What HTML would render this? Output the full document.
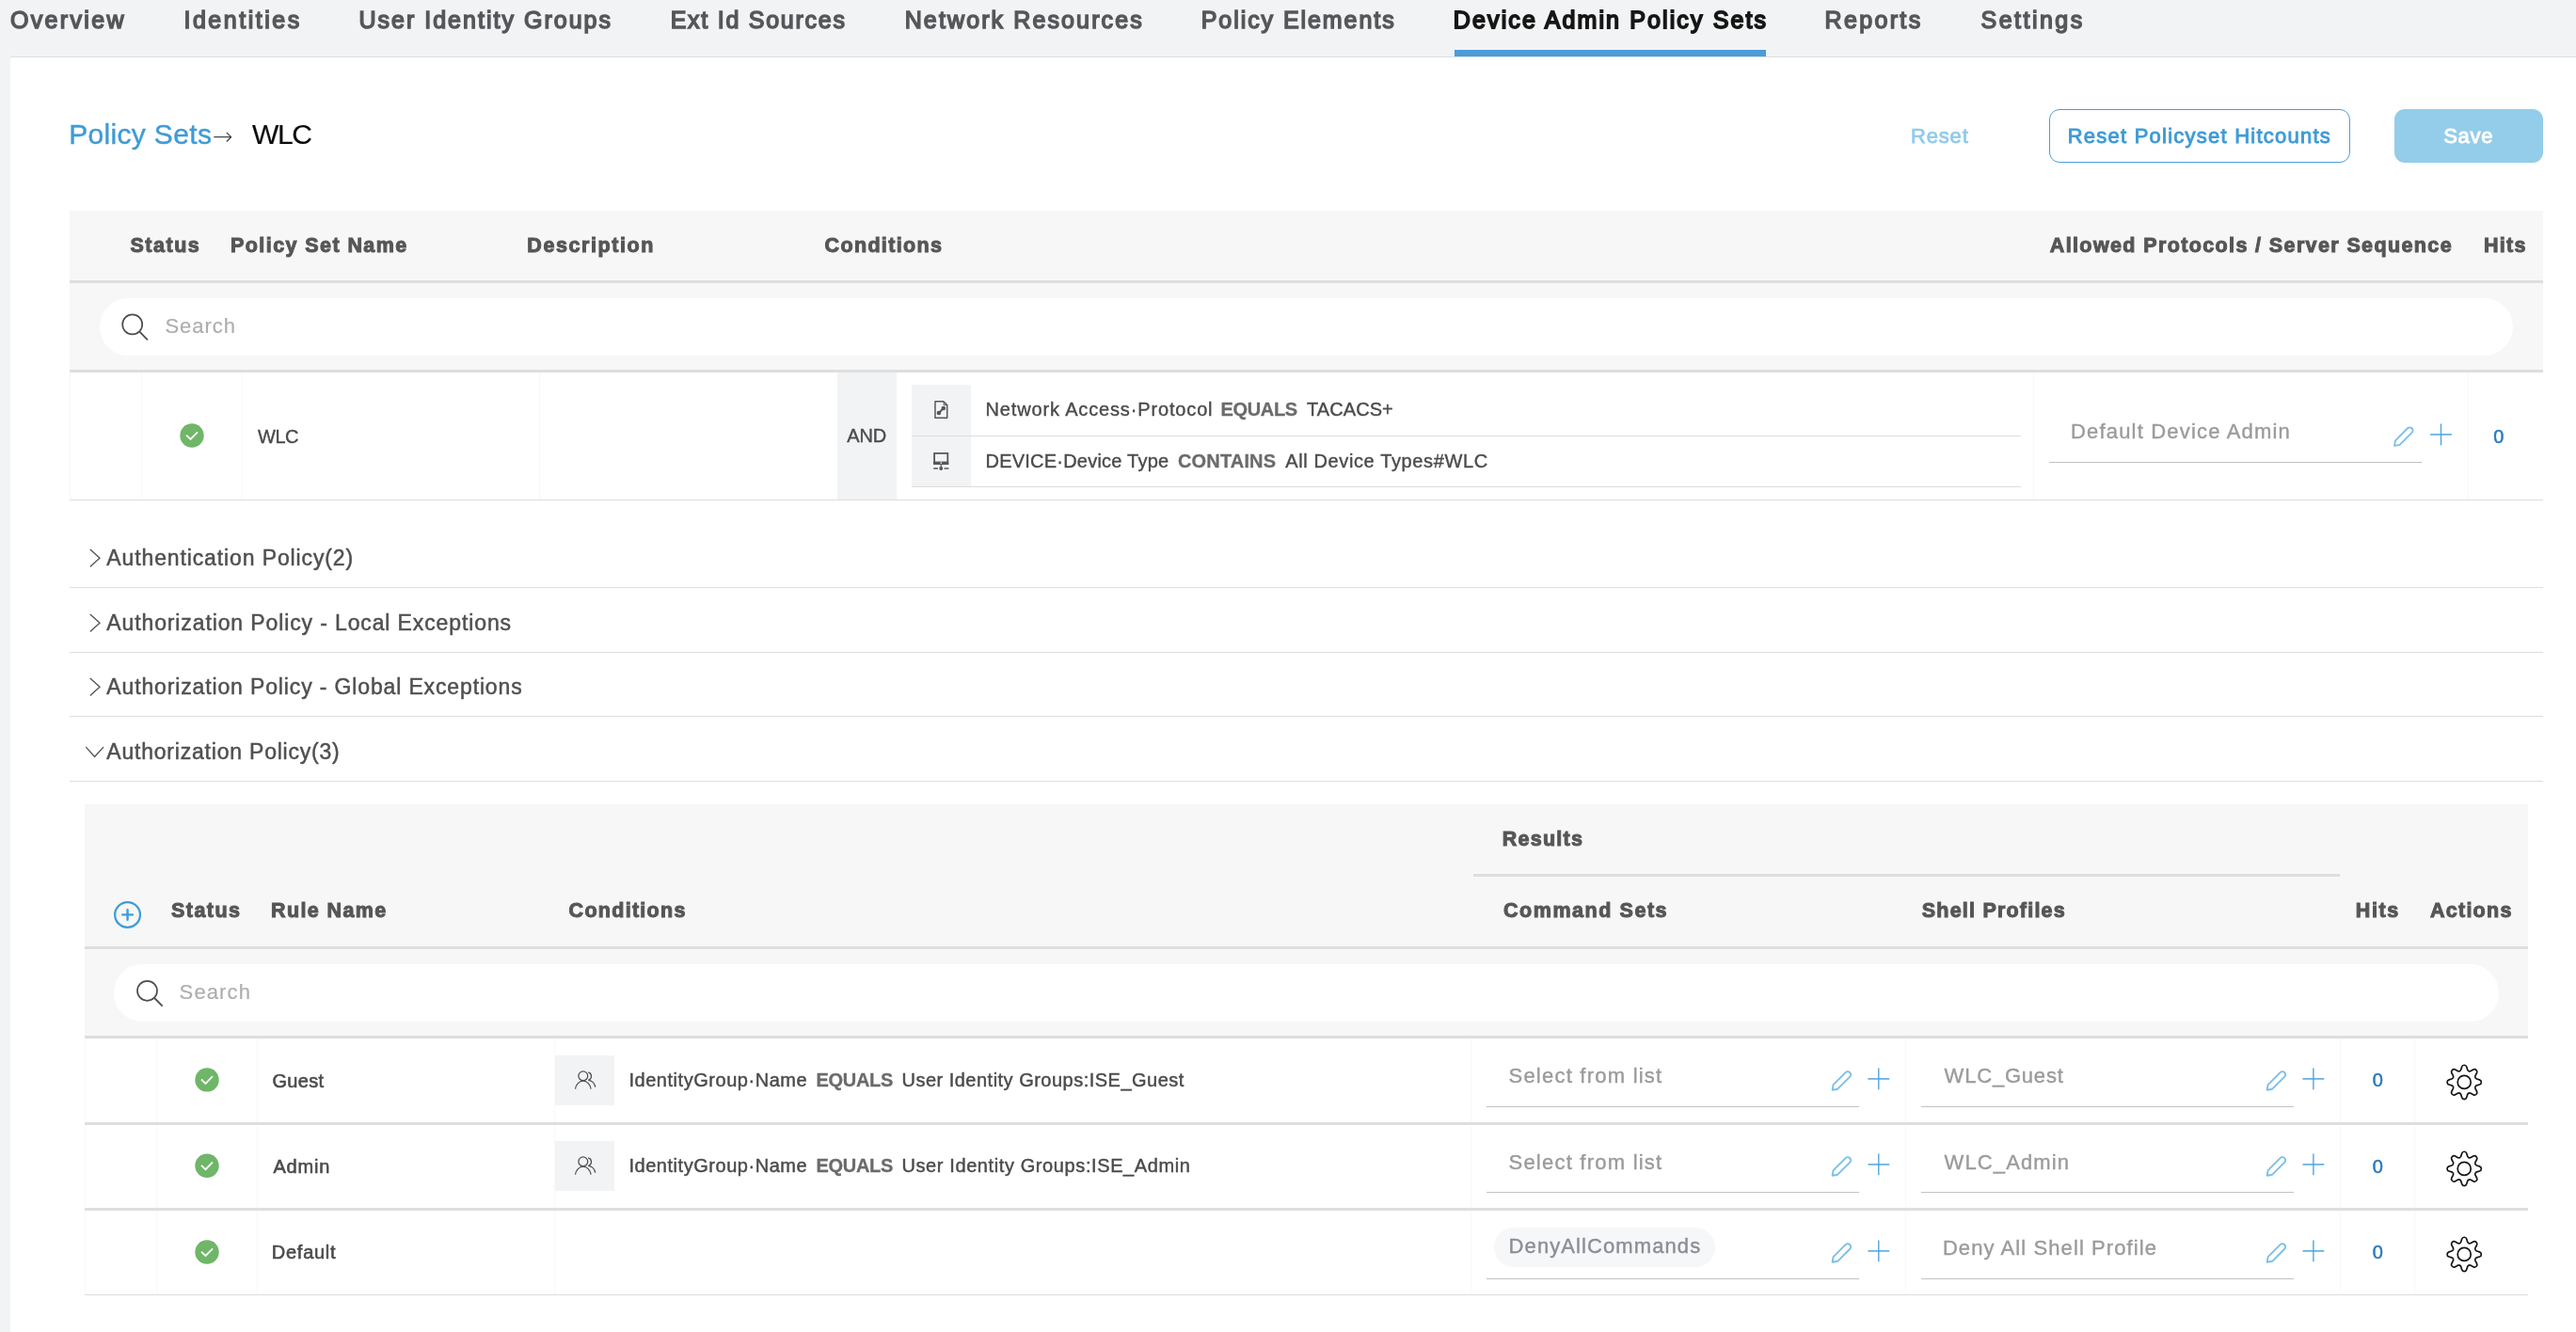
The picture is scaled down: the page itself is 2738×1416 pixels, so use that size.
<!DOCTYPE html>
<html lang="en">
<head>
<meta charset="utf-8">
<title>Device Admin Policy Sets - WLC</title>
<style>
html,body{margin:0;padding:0;background:#fff;}
body{width:2738px;height:1416px;position:relative;font-family:"Liberation Sans",Arial,sans-serif;}
.sec{position:absolute;left:0;top:0;will-change:transform;}
.sec div,.t,.i{position:absolute;}
.t{white-space:nowrap;line-height:1;}
.i{overflow:visible;}
</style>
</head>
<body>
<div class="sec" id="nav">
<div style="left:0px;top:0px;width:2738px;height:60px;background:#f2f3f5;"></div>
<div style="left:11px;top:60px;width:2727px;height:1px;background:#dcdddf;"></div>
<div style="left:0px;top:60px;width:11px;height:1356px;background:#f2f3f5;"></div>
<span class="t" style="left:10.97px;top:9px;font-size:25px;color:#55575a;letter-spacing:2.33px;-webkit-text-stroke:1.5px #55575a;">Overview</span>
<span class="t" style="left:195.44px;top:9px;font-size:25px;color:#55575a;letter-spacing:2.52px;-webkit-text-stroke:1.5px #55575a;">Identities</span>
<span class="t" style="left:381.42px;top:9px;font-size:25px;color:#55575a;letter-spacing:2.02px;-webkit-text-stroke:1.5px #55575a;">User Identity Groups</span>
<span class="t" style="left:712.7px;top:9px;font-size:25px;color:#55575a;letter-spacing:1.74px;-webkit-text-stroke:1.5px #55575a;">Ext Id Sources</span>
<span class="t" style="left:961.7px;top:9px;font-size:25px;color:#55575a;letter-spacing:2.12px;-webkit-text-stroke:1.5px #55575a;">Network Resources</span>
<span class="t" style="left:1276.7px;top:9px;font-size:25px;color:#55575a;letter-spacing:1.94px;-webkit-text-stroke:1.5px #55575a;">Policy Elements</span>
<span class="t" style="left:1544.85px;top:9px;font-size:25px;color:#161616;letter-spacing:2.12px;-webkit-text-stroke:1.8px #161616;">Device Admin Policy Sets</span>
<span class="t" style="left:1939.5px;top:9px;font-size:25px;color:#55575a;letter-spacing:2.35px;-webkit-text-stroke:1.5px #55575a;">Reports</span>
<span class="t" style="left:2105.61px;top:9px;font-size:25px;color:#55575a;letter-spacing:2.46px;-webkit-text-stroke:1.5px #55575a;">Settings</span>
<div style="left:1546px;top:53px;width:331px;height:7px;background:#4a9dd7;"></div>
</div>
<div class="sec" id="head">
<span class="t" style="left:73.14px;top:128px;font-size:30px;color:#3f9bd6;letter-spacing:0.34px;-webkit-text-stroke:0.4px #3f9bd6;">Policy Sets</span>
<span class="t" style="left:226px;top:132px;font-family:'DejaVu Sans',sans-serif;font-weight:200;font-size:26px;color:#444">→</span>
<span class="t" style="left:267.97px;top:128px;font-size:30px;color:#0b0b0b;letter-spacing:-1.3px;-webkit-text-stroke:0.2px #0b0b0b;">WLC</span>
<span class="t" style="left:2031.07px;top:134px;font-size:22px;color:#8fcbea;letter-spacing:0.81px;-webkit-text-stroke:0.75px #8fcbea;">Reset</span>
<div style="left:2178px;top:116px;width:320px;height:57px;background:#fff;border:1.5px solid #4a9fd8;border-radius:11px;box-sizing:border-box;"></div>
<span class="t" style="left:2197.65px;top:134px;font-size:22px;color:#3f9bd6;letter-spacing:1.24px;-webkit-text-stroke:0.9px #3f9bd6;">Reset Policyset Hitcounts</span>
<div style="left:2545px;top:116px;width:158px;height:57px;background:#94cde9;border-radius:11px;"></div>
<span class="t" style="left:2597.15px;top:134px;font-size:22px;color:#ffffff;letter-spacing:0.77px;-webkit-text-stroke:0.9px #ffffff;">Save</span>
</div>
<div class="sec" id="policyset">
<div style="left:74px;top:224px;width:2629px;height:172px;background:#f7f7f7;"></div>
<div style="left:74px;top:298px;width:2629px;height:3px;background:#dedede;"></div>
<div style="left:74px;top:393px;width:2629px;height:3px;background:#dedede;"></div>
<span class="t" style="left:138.48px;top:251px;font-size:21.5px;color:#565658;letter-spacing:1.52px;font-weight:700;-webkit-text-stroke:1px #565658;">Status</span>
<span class="t" style="left:245.06px;top:251px;font-size:21.5px;color:#565658;letter-spacing:1.42px;font-weight:700;-webkit-text-stroke:1px #565658;">Policy Set Name</span>
<span class="t" style="left:560.36px;top:251px;font-size:21.5px;color:#565658;letter-spacing:1.58px;font-weight:700;-webkit-text-stroke:1px #565658;">Description</span>
<span class="t" style="left:876.62px;top:251px;font-size:21.5px;color:#565658;letter-spacing:1.33px;font-weight:700;-webkit-text-stroke:1px #565658;">Conditions</span>
<span class="t" style="left:2178.76px;top:251px;font-size:21.5px;color:#565658;letter-spacing:1.38px;font-weight:700;-webkit-text-stroke:1px #565658;">Allowed Protocols / Server Sequence</span>
<span class="t" style="left:2640.06px;top:251px;font-size:21.5px;color:#565658;letter-spacing:1.23px;font-weight:700;-webkit-text-stroke:1px #565658;">Hits</span>
<div style="left:106px;top:317px;width:2565px;height:61px;background:#fff;border-radius:31px;"></div>
<svg class="i" style="left:126px;top:330px" width="35" height="35" viewBox="126 330 35 35"><circle cx="140.7" cy="344.9" r="10.5" fill="none" stroke="#4e4e51" stroke-width="1.7"/><path d="M148.4 352.6L156.9 361.3" stroke="#4e4e51" stroke-width="1.8" fill="none"/></svg>
<span class="t" style="left:175.4px;top:336px;font-size:22px;color:#acaeb0;letter-spacing:0.96px;-webkit-text-stroke:0.2px #acaeb0;">Search</span>
<div style="left:74px;top:396px;width:1px;height:135px;background:#f8f8f8;"></div>
<div style="left:150px;top:396px;width:1px;height:135px;background:#f8f8f8;"></div>
<div style="left:257px;top:396px;width:1px;height:135px;background:#f8f8f8;"></div>
<div style="left:573px;top:396px;width:1px;height:135px;background:#f8f8f8;"></div>
<div style="left:2161px;top:396px;width:1px;height:135px;background:#f8f8f8;"></div>
<div style="left:2623px;top:396px;width:1px;height:135px;background:#f8f8f8;"></div>
<div style="left:74px;top:531px;width:2629px;height:1px;background:#dddddd;"></div>
<svg class="i" style="left:190px;top:449px" width="28" height="28" viewBox="190 449 28 28"><circle cx="204" cy="463" r="12.7" fill="#6fb668"/><path d="M198 462.6L202.5 467L210 459.3" fill="none" stroke="#fff" stroke-width="1.8"/></svg>
<span class="t" style="left:274.11px;top:454px;font-size:20px;color:#4b4b4e;letter-spacing:-0.5px;-webkit-text-stroke:0.4px #4b4b4e;">WLC</span>
<div style="left:890px;top:396px;width:63px;height:135px;background:#f2f3f5;"></div>
<span class="t" style="left:900.36px;top:453px;font-size:20px;color:#4b4b4e;letter-spacing:-0.17px;-webkit-text-stroke:0.4px #4b4b4e;">AND</span>
<div style="left:969px;top:409px;width:63px;height:108px;background:#f2f3f5;"></div>
<div style="left:969px;top:463px;width:1179px;height:1px;background:#dddddd;"></div>
<div style="left:969px;top:517px;width:1179px;height:1px;background:#dddddd;"></div>
<svg class="i" style="left:991px;top:424px" width="20" height="23" viewBox="991 424 20 23"><path d="M993.95 426.75H1002.8L1006.7 430.6V444.2H993.95Z" fill="none" stroke="#56565a" stroke-width="1.5" stroke-linejoin="round"/><path d="M1003.1 427.6V430.6H1006" fill="none" stroke="#56565a" stroke-width="1"/><path d="M997.9 439L1002.8 434" fill="none" stroke="#56565a" stroke-width="1.9"/><circle cx="997.9" cy="439" r="2.3" fill="#56565a"/><circle cx="1002.8" cy="434" r="2.3" fill="#56565a"/></svg>
<svg class="i" style="left:990px;top:479px" width="21" height="23" viewBox="990 479 21 23"><path d="M993.1 481.9H1007.3V493H993.1Z" fill="none" stroke="#56565a" stroke-width="1.8"/><rect x="992.2" y="490.6" width="16" height="3.2" fill="#56565a"/><rect x="999.6" y="491.4" width="1.4" height="1.4" fill="#fff"/><path d="M1000.2 493.8V497" stroke="#56565a" stroke-width="1.2"/><circle cx="1000.2" cy="498" r="2" fill="#56565a"/><path d="M992.2 498H996.9M1003.6 498H1008.4" stroke="#56565a" stroke-width="1.3"/></svg>
<span class="t" style="left:1047.56px;top:425px;font-size:20px;color:#4b4b4e;letter-spacing:0.85px;-webkit-text-stroke:0.4px #4b4b4e;">Network Access·Protocol</span>
<span class="t" style="left:1297.41px;top:425px;font-size:20px;color:#6b6b6d;letter-spacing:-0.32px;font-weight:700;-webkit-text-stroke:0.3px #6b6b6d;">EQUALS</span>
<span class="t" style="left:1389.05px;top:425px;font-size:20px;color:#4b4b4e;letter-spacing:0.07px;-webkit-text-stroke:0.4px #4b4b4e;">TACACS+</span>
<span class="t" style="left:1047.56px;top:480px;font-size:20px;color:#4b4b4e;letter-spacing:0.22px;-webkit-text-stroke:0.4px #4b4b4e;">DEVICE·Device Type</span>
<span class="t" style="left:1252.03px;top:480px;font-size:20px;color:#6b6b6d;letter-spacing:0.15px;font-weight:700;-webkit-text-stroke:0.3px #6b6b6d;">CONTAINS</span>
<span class="t" style="left:1366.16px;top:480px;font-size:20px;color:#4b4b4e;letter-spacing:0.63px;-webkit-text-stroke:0.4px #4b4b4e;">All Device Types#WLC</span>
<span class="t" style="left:2201px;top:448px;font-size:22px;color:#9b9b9b;letter-spacing:1.18px;-webkit-text-stroke:0.4px #9b9b9b;">Default Device Admin</span>
<div style="left:2178px;top:491px;width:396px;height:1px;background:#c2c2c2;"></div>
<svg class="i" style="left:2542px;top:450px" width="27" height="27" viewBox="2542 450 27 27"><path d="M2545 473.9L2546 468.3L2559.01 455.29A3.2 3.2 0 0 1 2563.61 459.89L2550.6 472.9Z" fill="none" stroke="#7cc0e6" stroke-width="1.9" stroke-linejoin="round"/></svg>
<svg class="i" style="left:2581px;top:448px" width="27" height="27" viewBox="2581 448 27 27"><path d="M2583.1 461.9H2605.9" fill="none" stroke="#5fb0e0" stroke-width="1.7"/><path d="M2594.5 450.5V473.3" fill="none" stroke="#4aa2d9" stroke-width="1.35"/></svg>
<span class="t" style="left:2650.17px;top:454px;font-size:20px;color:#2a79bb;-webkit-text-stroke:0.5px #2a79bb;">0</span>
</div>
<div class="sec" id="accordion">
<svg class="i" style="left:92px;top:581px" width="18" height="25" viewBox="92 581 18 25"><path d="M95.8 584L106 593.3L95.8 602.6" fill="none" stroke="#515154" stroke-width="1.3"/></svg>
<span class="t" style="left:113.31px;top:582px;font-size:23px;color:#505053;letter-spacing:0.88px;-webkit-text-stroke:0.5px #505053;">Authentication Policy(2)</span>
<div style="left:74px;top:624px;width:2629px;height:1px;background:#dddddd;"></div>
<svg class="i" style="left:92px;top:650px" width="18" height="25" viewBox="92 650 18 25"><path d="M95.8 653L106 662.3L95.8 671.6" fill="none" stroke="#515154" stroke-width="1.3"/></svg>
<span class="t" style="left:113.31px;top:651px;font-size:23px;color:#505053;letter-spacing:0.88px;-webkit-text-stroke:0.5px #505053;">Authorization Policy - Local Exceptions</span>
<div style="left:74px;top:693px;width:2629px;height:1px;background:#dddddd;"></div>
<svg class="i" style="left:92px;top:718px" width="18" height="25" viewBox="92 718 18 25"><path d="M95.8 721L106 730.3L95.8 739.6" fill="none" stroke="#515154" stroke-width="1.3"/></svg>
<span class="t" style="left:113.31px;top:719px;font-size:23px;color:#505053;letter-spacing:0.86px;-webkit-text-stroke:0.5px #505053;">Authorization Policy - Global Exceptions</span>
<div style="left:74px;top:761px;width:2629px;height:1px;background:#dddddd;"></div>
<svg class="i" style="left:88px;top:791px" width="26" height="17" viewBox="88 791 26 17"><path d="M91.3 794.1L100.6 804.5L110 794.1" fill="none" stroke="#515154" stroke-width="1.3"/></svg>
<span class="t" style="left:113.31px;top:788px;font-size:23px;color:#505053;letter-spacing:0.79px;-webkit-text-stroke:0.5px #505053;">Authorization Policy(3)</span>
<div style="left:74px;top:830px;width:2629px;height:1px;background:#dddddd;"></div>
</div>
<div class="sec" id="authz">
<div style="left:90px;top:855px;width:2597px;height:249px;background:#f7f7f7;"></div>
<span class="t" style="left:1596.86px;top:882px;font-size:21.5px;color:#565658;letter-spacing:1.22px;font-weight:700;-webkit-text-stroke:1px #565658;">Results</span>
<div style="left:1566px;top:929px;width:921px;height:3px;background:#dedede;"></div>
<svg class="i" style="left:118px;top:955px" width="35" height="35" viewBox="118 955 35 35"><circle cx="135.55" cy="972.45" r="13.4" fill="none" stroke="#3e9cd8" stroke-width="2.3"/><path d="M130.2 972.4H140.9M135.55 967.1V977.8" fill="none" stroke="#3e9cd8" stroke-width="2.4" stroke-linecap="round"/></svg>
<span class="t" style="left:181.98px;top:958px;font-size:21.5px;color:#565658;letter-spacing:1.48px;font-weight:700;-webkit-text-stroke:1px #565658;">Status</span>
<span class="t" style="left:288.06px;top:958px;font-size:21.5px;color:#565658;letter-spacing:1.38px;font-weight:700;-webkit-text-stroke:1px #565658;">Rule Name</span>
<span class="t" style="left:604.62px;top:958px;font-size:21.5px;color:#565658;letter-spacing:1.28px;font-weight:700;-webkit-text-stroke:1px #565658;">Conditions</span>
<span class="t" style="left:1598.02px;top:958px;font-size:21.5px;color:#565658;letter-spacing:1.55px;font-weight:700;-webkit-text-stroke:1px #565658;">Command Sets</span>
<span class="t" style="left:2042.78px;top:958px;font-size:21.5px;color:#565658;letter-spacing:1.21px;font-weight:700;-webkit-text-stroke:1px #565658;">Shell Profiles</span>
<span class="t" style="left:2503.86px;top:958px;font-size:21.5px;color:#565658;letter-spacing:1.6px;font-weight:700;-webkit-text-stroke:1px #565658;">Hits</span>
<span class="t" style="left:2582.96px;top:958px;font-size:21.5px;color:#565658;letter-spacing:1.26px;font-weight:700;-webkit-text-stroke:1px #565658;">Actions</span>
<div style="left:90px;top:1006px;width:2597px;height:3px;background:#dedede;"></div>
<div style="left:121px;top:1025px;width:2535px;height:61px;background:#fff;border-radius:31px;"></div>
<svg class="i" style="left:142px;top:1039px" width="35" height="35" viewBox="142 1039 35 35"><circle cx="156.5" cy="1053.3" r="10.5" fill="none" stroke="#4e4e51" stroke-width="1.7"/><path d="M164.2 1061L172.7 1069.7" stroke="#4e4e51" stroke-width="1.8" fill="none"/></svg>
<span class="t" style="left:190.6px;top:1044px;font-size:22px;color:#acaeb0;letter-spacing:1.12px;-webkit-text-stroke:0.2px #acaeb0;">Search</span>
<div style="left:90px;top:1101px;width:2597px;height:3px;background:#dedede;"></div>
<div style="left:90px;top:1104px;width:1px;height:89px;background:#f8f8f8;"></div>
<div style="left:166px;top:1104px;width:1px;height:89px;background:#f8f8f8;"></div>
<div style="left:273px;top:1104px;width:1px;height:89px;background:#f8f8f8;"></div>
<div style="left:589px;top:1104px;width:1px;height:89px;background:#f8f8f8;"></div>
<div style="left:1563px;top:1104px;width:1px;height:89px;background:#f8f8f8;"></div>
<div style="left:2025px;top:1104px;width:1px;height:89px;background:#f8f8f8;"></div>
<div style="left:2487px;top:1104px;width:1px;height:89px;background:#f8f8f8;"></div>
<div style="left:2566px;top:1104px;width:1px;height:89px;background:#f8f8f8;"></div>
<div style="left:90px;top:1193px;width:2597px;height:3px;background:#dedede;"></div>
<svg class="i" style="left:206px;top:1133px" width="28" height="29" viewBox="206 1133 28 29"><circle cx="220" cy="1147.9" r="12.7" fill="#6fb668"/><path d="M214 1147.5L218.5 1151.9L226 1144.2" fill="none" stroke="#fff" stroke-width="1.8"/></svg>
<span class="t" style="left:289.49px;top:1139px;font-size:20px;color:#4b4b4e;letter-spacing:0.3px;-webkit-text-stroke:0.6px #4b4b4e;">Guest</span>
<div style="left:590px;top:1122px;width:63px;height:53px;background:#f2f3f5;"></div>
<svg class="i" style="left:607px;top:1134px" width="29" height="27" viewBox="607 1134 29 27"><circle cx="619.8" cy="1143.8" r="4.9" fill="none" stroke="#4f4f52" stroke-width="1.3"/><path d="M611.5 1157.6A8.4 9.9 0 0 1 628.1 1157.6" fill="none" stroke="#4f4f52" stroke-width="1.3"/><path d="M625.2 1139.9A4.3 4.3 0 0 1 625.4 1148.2" fill="none" stroke="#4f4f52" stroke-width="1.3"/><path d="M625.4 1148.3A8.2 8.6 0 0 1 632.7 1155.6" fill="none" stroke="#4f4f52" stroke-width="1.3"/></svg>
<span class="t" style="left:668.38px;top:1138px;font-size:20px;color:#4b4b4e;letter-spacing:0.54px;-webkit-text-stroke:0.45px #4b4b4e;">IdentityGroup·Name</span>
<span class="t" style="left:867.51px;top:1138px;font-size:20px;color:#6b6b6d;letter-spacing:-0.32px;font-weight:700;-webkit-text-stroke:0.3px #6b6b6d;">EQUALS</span>
<span class="t" style="left:958.48px;top:1138px;font-size:20px;color:#4b4b4e;letter-spacing:0.49px;-webkit-text-stroke:0.45px #4b4b4e;">User Identity Groups:ISE_Guest</span>
<span class="t" style="left:1603.5px;top:1133px;font-size:22px;color:#9b9b9b;letter-spacing:1.23px;-webkit-text-stroke:0.4px #9b9b9b;">Select from list</span>
<div style="left:1580px;top:1176px;width:395.5px;height:1px;background:#c2c2c2;"></div>
<svg class="i" style="left:1944px;top:1135px" width="27" height="27" viewBox="1944 1135 27 27"><path d="M1947.6 1158.7L1948.6 1153.1L1961.61 1140.09A3.2 3.2 0 0 1 1966.21 1144.69L1953.2 1157.7Z" fill="none" stroke="#7cc0e6" stroke-width="1.9" stroke-linejoin="round"/></svg>
<svg class="i" style="left:1983px;top:1133px" width="27" height="27" viewBox="1983 1133 27 27"><path d="M1985.4 1146.9H2008.2" fill="none" stroke="#5fb0e0" stroke-width="1.7"/><path d="M1996.8 1135.5V1158.3" fill="none" stroke="#4aa2d9" stroke-width="1.35"/></svg>
<span class="t" style="left:2066.6px;top:1133px;font-size:22px;color:#9b9b9b;letter-spacing:0.8px;-webkit-text-stroke:0.4px #9b9b9b;">WLC_Guest</span>
<div style="left:2042px;top:1176px;width:396px;height:1px;background:#c2c2c2;"></div>
<svg class="i" style="left:2406px;top:1135px" width="27" height="27" viewBox="2406 1135 27 27"><path d="M2409.6 1158.7L2410.6 1153.1L2423.61 1140.09A3.2 3.2 0 0 1 2428.21 1144.69L2415.2 1157.7Z" fill="none" stroke="#7cc0e6" stroke-width="1.9" stroke-linejoin="round"/></svg>
<svg class="i" style="left:2445px;top:1133px" width="27" height="27" viewBox="2445 1133 27 27"><path d="M2447.5 1146.9H2470.3" fill="none" stroke="#5fb0e0" stroke-width="1.7"/><path d="M2458.9 1135.5V1158.3" fill="none" stroke="#4aa2d9" stroke-width="1.35"/></svg>
<span class="t" style="left:2521.67px;top:1138px;font-size:20px;color:#2a79bb;-webkit-text-stroke:0.5px #2a79bb;">0</span>
<svg class="i" style="left:2598px;top:1129px" width="43" height="43" viewBox="2598 1129 43 43"><path d="M2616.61 1134.2A2.7 2.7 0 0 1 2621.79 1134.2L2622.61 1137.05A2.5 2.5 0 0 0 2626.23 1138.55L2628.82 1137.11A2.7 2.7 0 0 1 2632.49 1140.78L2631.05 1143.37A2.5 2.5 0 0 0 2632.55 1146.99L2635.4 1147.81A2.7 2.7 0 0 1 2635.4 1152.99L2632.55 1153.81A2.5 2.5 0 0 0 2631.05 1157.43L2632.49 1160.02A2.7 2.7 0 0 1 2628.82 1163.69L2626.23 1162.25A2.5 2.5 0 0 0 2622.61 1163.75L2621.79 1166.6A2.7 2.7 0 0 1 2616.61 1166.6L2615.79 1163.75A2.5 2.5 0 0 0 2612.17 1162.25L2609.58 1163.69A2.7 2.7 0 0 1 2605.91 1160.02L2607.35 1157.43A2.5 2.5 0 0 0 2605.85 1153.81L2603 1152.99A2.7 2.7 0 0 1 2603 1147.81L2605.85 1146.99A2.5 2.5 0 0 0 2607.35 1143.37L2605.91 1140.78A2.7 2.7 0 0 1 2609.58 1137.11L2612.17 1138.55A2.5 2.5 0 0 0 2615.79 1137.05L2616.61 1134.2Z" fill="none" stroke="#161616" stroke-width="1.7" stroke-linejoin="round"/><circle cx="2619.2" cy="1150.4" r="7.0" fill="none" stroke="#161616" stroke-width="1.7"/></svg>
<div style="left:90px;top:1196px;width:1px;height:88px;background:#f8f8f8;"></div>
<div style="left:166px;top:1196px;width:1px;height:88px;background:#f8f8f8;"></div>
<div style="left:273px;top:1196px;width:1px;height:88px;background:#f8f8f8;"></div>
<div style="left:589px;top:1196px;width:1px;height:88px;background:#f8f8f8;"></div>
<div style="left:1563px;top:1196px;width:1px;height:88px;background:#f8f8f8;"></div>
<div style="left:2025px;top:1196px;width:1px;height:88px;background:#f8f8f8;"></div>
<div style="left:2487px;top:1196px;width:1px;height:88px;background:#f8f8f8;"></div>
<div style="left:2566px;top:1196px;width:1px;height:88px;background:#f8f8f8;"></div>
<div style="left:90px;top:1284px;width:2597px;height:3px;background:#dedede;"></div>
<svg class="i" style="left:206px;top:1225px" width="28" height="29" viewBox="206 1225 28 29"><circle cx="220" cy="1239.2" r="12.7" fill="#6fb668"/><path d="M214 1238.8L218.5 1243.2L226 1235.5" fill="none" stroke="#fff" stroke-width="1.8"/></svg>
<span class="t" style="left:290.46px;top:1230px;font-size:20px;color:#4b4b4e;letter-spacing:0.81px;-webkit-text-stroke:0.6px #4b4b4e;">Admin</span>
<div style="left:590px;top:1213px;width:63px;height:53px;background:#f2f3f5;"></div>
<svg class="i" style="left:607px;top:1225px" width="29" height="27" viewBox="607 1225 29 27"><circle cx="619.8" cy="1234.8" r="4.9" fill="none" stroke="#4f4f52" stroke-width="1.3"/><path d="M611.5 1248.6A8.4 9.9 0 0 1 628.1 1248.6" fill="none" stroke="#4f4f52" stroke-width="1.3"/><path d="M625.2 1230.9A4.3 4.3 0 0 1 625.4 1239.2" fill="none" stroke="#4f4f52" stroke-width="1.3"/><path d="M625.4 1239.3A8.2 8.6 0 0 1 632.7 1246.6" fill="none" stroke="#4f4f52" stroke-width="1.3"/></svg>
<span class="t" style="left:668.38px;top:1229px;font-size:20px;color:#4b4b4e;letter-spacing:0.54px;-webkit-text-stroke:0.45px #4b4b4e;">IdentityGroup·Name</span>
<span class="t" style="left:867.51px;top:1229px;font-size:20px;color:#6b6b6d;letter-spacing:-0.32px;font-weight:700;-webkit-text-stroke:0.3px #6b6b6d;">EQUALS</span>
<span class="t" style="left:958.48px;top:1229px;font-size:20px;color:#4b4b4e;letter-spacing:0.6px;-webkit-text-stroke:0.45px #4b4b4e;">User Identity Groups:ISE_Admin</span>
<span class="t" style="left:1603.5px;top:1225px;font-size:22px;color:#9b9b9b;letter-spacing:1.23px;-webkit-text-stroke:0.4px #9b9b9b;">Select from list</span>
<div style="left:1580px;top:1267px;width:395.5px;height:1px;background:#c2c2c2;"></div>
<svg class="i" style="left:1944px;top:1226px" width="27" height="27" viewBox="1944 1226 27 27"><path d="M1947.6 1249.7L1948.6 1244.1L1961.61 1231.09A3.2 3.2 0 0 1 1966.21 1235.69L1953.2 1248.7Z" fill="none" stroke="#7cc0e6" stroke-width="1.9" stroke-linejoin="round"/></svg>
<svg class="i" style="left:1983px;top:1224px" width="27" height="27" viewBox="1983 1224 27 27"><path d="M1985.4 1237.9H2008.2" fill="none" stroke="#5fb0e0" stroke-width="1.7"/><path d="M1996.8 1226.5V1249.3" fill="none" stroke="#4aa2d9" stroke-width="1.35"/></svg>
<span class="t" style="left:2066.6px;top:1225px;font-size:22px;color:#9b9b9b;letter-spacing:1.12px;-webkit-text-stroke:0.4px #9b9b9b;">WLC_Admin</span>
<div style="left:2042px;top:1267px;width:396px;height:1px;background:#c2c2c2;"></div>
<svg class="i" style="left:2406px;top:1226px" width="27" height="27" viewBox="2406 1226 27 27"><path d="M2409.6 1249.7L2410.6 1244.1L2423.61 1231.09A3.2 3.2 0 0 1 2428.21 1235.69L2415.2 1248.7Z" fill="none" stroke="#7cc0e6" stroke-width="1.9" stroke-linejoin="round"/></svg>
<svg class="i" style="left:2445px;top:1224px" width="27" height="27" viewBox="2445 1224 27 27"><path d="M2447.5 1237.9H2470.3" fill="none" stroke="#5fb0e0" stroke-width="1.7"/><path d="M2458.9 1226.5V1249.3" fill="none" stroke="#4aa2d9" stroke-width="1.35"/></svg>
<span class="t" style="left:2521.67px;top:1230px;font-size:20px;color:#2a79bb;-webkit-text-stroke:0.5px #2a79bb;">0</span>
<svg class="i" style="left:2598px;top:1221px" width="43" height="43" viewBox="2598 1221 43 43"><path d="M2616.61 1226.2A2.7 2.7 0 0 1 2621.79 1226.2L2622.61 1229.05A2.5 2.5 0 0 0 2626.23 1230.55L2628.82 1229.11A2.7 2.7 0 0 1 2632.49 1232.78L2631.05 1235.37A2.5 2.5 0 0 0 2632.55 1238.99L2635.4 1239.81A2.7 2.7 0 0 1 2635.4 1244.99L2632.55 1245.81A2.5 2.5 0 0 0 2631.05 1249.43L2632.49 1252.02A2.7 2.7 0 0 1 2628.82 1255.69L2626.23 1254.25A2.5 2.5 0 0 0 2622.61 1255.75L2621.79 1258.6A2.7 2.7 0 0 1 2616.61 1258.6L2615.79 1255.75A2.5 2.5 0 0 0 2612.17 1254.25L2609.58 1255.69A2.7 2.7 0 0 1 2605.91 1252.02L2607.35 1249.43A2.5 2.5 0 0 0 2605.85 1245.81L2603 1244.99A2.7 2.7 0 0 1 2603 1239.81L2605.85 1238.99A2.5 2.5 0 0 0 2607.35 1235.37L2605.91 1232.78A2.7 2.7 0 0 1 2609.58 1229.11L2612.17 1230.55A2.5 2.5 0 0 0 2615.79 1229.05L2616.61 1226.2Z" fill="none" stroke="#161616" stroke-width="1.7" stroke-linejoin="round"/><circle cx="2619.2" cy="1242.4" r="7.0" fill="none" stroke="#161616" stroke-width="1.7"/></svg>
<div style="left:90px;top:1287px;width:1px;height:89px;background:#f8f8f8;"></div>
<div style="left:166px;top:1287px;width:1px;height:89px;background:#f8f8f8;"></div>
<div style="left:273px;top:1287px;width:1px;height:89px;background:#f8f8f8;"></div>
<div style="left:589px;top:1287px;width:1px;height:89px;background:#f8f8f8;"></div>
<div style="left:1563px;top:1287px;width:1px;height:89px;background:#f8f8f8;"></div>
<div style="left:2025px;top:1287px;width:1px;height:89px;background:#f8f8f8;"></div>
<div style="left:2487px;top:1287px;width:1px;height:89px;background:#f8f8f8;"></div>
<div style="left:2566px;top:1287px;width:1px;height:89px;background:#f8f8f8;"></div>
<div style="left:90px;top:1376px;width:2597px;height:1px;background:#dddddd;"></div>
<svg class="i" style="left:206px;top:1317px" width="28" height="28" viewBox="206 1317 28 28"><circle cx="220" cy="1331" r="12.7" fill="#6fb668"/><path d="M214 1330.6L218.5 1335L226 1327.3" fill="none" stroke="#fff" stroke-width="1.8"/></svg>
<span class="t" style="left:288.86px;top:1321px;font-size:20px;color:#4b4b4e;letter-spacing:0.72px;-webkit-text-stroke:0.6px #4b4b4e;">Default</span>
<div style="left:1588px;top:1305px;width:235px;height:42px;background:#f6f7f9;border-radius:21px;"></div>
<span class="t" style="left:1603.6px;top:1314px;font-size:22px;color:#8a8e96;letter-spacing:1.09px;-webkit-text-stroke:0.4px #8a8e96;">DenyAllCommands</span>
<div style="left:1580px;top:1359px;width:395.5px;height:1px;background:#c2c2c2;"></div>
<svg class="i" style="left:1944px;top:1318px" width="27" height="27" viewBox="1944 1318 27 27"><path d="M1947.6 1341.8L1948.6 1336.2L1961.61 1323.19A3.2 3.2 0 0 1 1966.21 1327.79L1953.2 1340.8Z" fill="none" stroke="#7cc0e6" stroke-width="1.9" stroke-linejoin="round"/></svg>
<svg class="i" style="left:1983px;top:1316px" width="27" height="27" viewBox="1983 1316 27 27"><path d="M1985.4 1329.9H2008.2" fill="none" stroke="#5fb0e0" stroke-width="1.7"/><path d="M1996.8 1318.5V1341.3" fill="none" stroke="#4aa2d9" stroke-width="1.35"/></svg>
<span class="t" style="left:2064.9px;top:1316px;font-size:22px;color:#9b9b9b;letter-spacing:1.09px;-webkit-text-stroke:0.4px #9b9b9b;">Deny All Shell Profile</span>
<div style="left:2042px;top:1359px;width:396px;height:1px;background:#c2c2c2;"></div>
<svg class="i" style="left:2406px;top:1318px" width="27" height="27" viewBox="2406 1318 27 27"><path d="M2409.6 1341.8L2410.6 1336.2L2423.61 1323.19A3.2 3.2 0 0 1 2428.21 1327.79L2415.2 1340.8Z" fill="none" stroke="#7cc0e6" stroke-width="1.9" stroke-linejoin="round"/></svg>
<svg class="i" style="left:2445px;top:1316px" width="27" height="27" viewBox="2445 1316 27 27"><path d="M2447.5 1329.9H2470.3" fill="none" stroke="#5fb0e0" stroke-width="1.7"/><path d="M2458.9 1318.5V1341.3" fill="none" stroke="#4aa2d9" stroke-width="1.35"/></svg>
<span class="t" style="left:2521.67px;top:1321px;font-size:20px;color:#2a79bb;-webkit-text-stroke:0.5px #2a79bb;">0</span>
<svg class="i" style="left:2598px;top:1312px" width="43" height="43" viewBox="2598 1312 43 43"><path d="M2616.61 1317.2A2.7 2.7 0 0 1 2621.79 1317.2L2622.61 1320.05A2.5 2.5 0 0 0 2626.23 1321.55L2628.82 1320.11A2.7 2.7 0 0 1 2632.49 1323.78L2631.05 1326.37A2.5 2.5 0 0 0 2632.55 1329.99L2635.4 1330.81A2.7 2.7 0 0 1 2635.4 1335.99L2632.55 1336.81A2.5 2.5 0 0 0 2631.05 1340.43L2632.49 1343.02A2.7 2.7 0 0 1 2628.82 1346.69L2626.23 1345.25A2.5 2.5 0 0 0 2622.61 1346.75L2621.79 1349.6A2.7 2.7 0 0 1 2616.61 1349.6L2615.79 1346.75A2.5 2.5 0 0 0 2612.17 1345.25L2609.58 1346.69A2.7 2.7 0 0 1 2605.91 1343.02L2607.35 1340.43A2.5 2.5 0 0 0 2605.85 1336.81L2603 1335.99A2.7 2.7 0 0 1 2603 1330.81L2605.85 1329.99A2.5 2.5 0 0 0 2607.35 1326.37L2605.91 1323.78A2.7 2.7 0 0 1 2609.58 1320.11L2612.17 1321.55A2.5 2.5 0 0 0 2615.79 1320.05L2616.61 1317.2Z" fill="none" stroke="#161616" stroke-width="1.7" stroke-linejoin="round"/><circle cx="2619.2" cy="1333.4" r="7.0" fill="none" stroke="#161616" stroke-width="1.7"/></svg>
</div>
</body>
</html>
